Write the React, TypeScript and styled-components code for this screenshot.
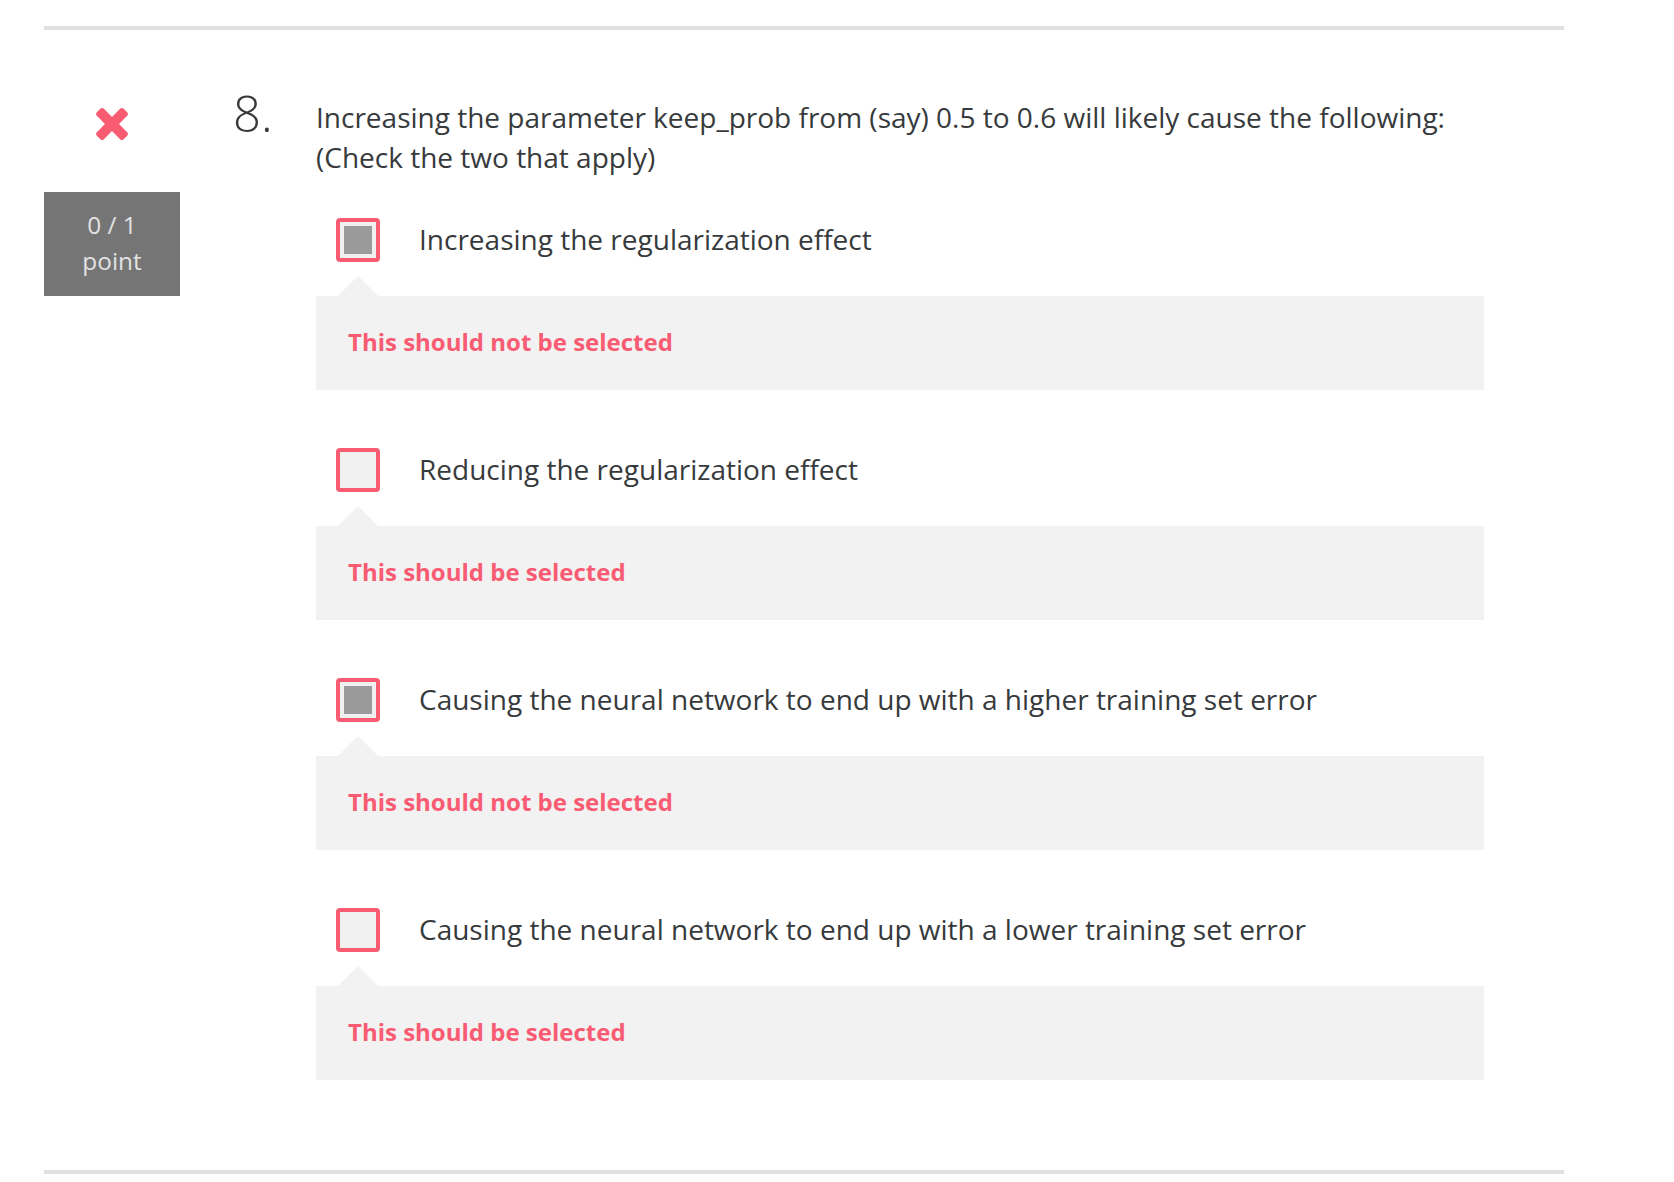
import React from "react";
import styled, { createGlobalStyle } from "styled-components";

const Global = createGlobalStyle`
  html, body { margin: 0; padding: 0; background: #ffffff; }
  body { font-family: "Open Sans", "Noto Sans", sans-serif; color: #373a3c; }
`;

const RED = "#f95c72";

const Page = styled.div`
  width: 1520px;
  padding: 26px 0 0 44px;
`;

const Rule = styled.div`
  height: 4px;
  background: #e0e0e0;
`;

const Question = styled.section`
  display: grid;
  grid-template-columns: 136px 136px 1168px;
  padding: 67px 0 90px;
`;

const Status = styled.div`
  display: flex;
  flex-direction: column;
  align-items: center;
`;

const Cross = styled.svg`
  width: 34px;
  height: 34px;
  margin-top: 10px;
  margin-bottom: 51px;
`;

const Score = styled.div`
  align-self: stretch;
  height: 104px;
  box-sizing: border-box;
  padding-top: 15px;
  background: #757575;
  color: #e2e2e2;
  font-size: 24.4px;
  line-height: 36px;
  text-align: center;
`;

const Number = styled.div`
  padding-left: 53px;
  margin-top: -4px;
  font-size: 49px;
  font-weight: 300;
  line-height: 40px;
`;

const Body = styled.div`
  display: flex;
  flex-direction: column;
`;

const Prompt = styled.div`
  font-size: 28px;
  line-height: 40px;
`;

const Options = styled.div`
  display: flex;
  flex-direction: column;
  gap: 58px;
  margin-top: 41px;
`;

const Option = styled.div`
  display: flex;
  flex-direction: column;
`;

const Row = styled.label`
  display: flex;
  align-items: center;
  padding-left: 20px;
`;

const Box = styled.span`
  width: 44px;
  height: 44px;
  box-sizing: border-box;
  border: 4px solid ${RED};
  border-radius: 4px;
  background: #f0f0f0;
  display: flex;
  align-items: center;
  justify-content: center;
  flex-shrink: 0;
`;

const Mark = styled.span`
  width: 28px;
  height: 28px;
  background: #9a9a9a;
`;

const Label = styled.span`
  margin-left: 39px;
  padding-bottom: 2px;
  font-size: 28px;
  line-height: 40px;
`;

const Feedback = styled.div`
  position: relative;
  margin-top: 34px;
  height: 94px;
  box-sizing: border-box;
  padding: 0 0 3px 32px;
  display: flex;
  align-items: center;
  background: #f2f2f2;
  color: ${RED};
  font-size: 24px;
  font-weight: 700;

  &::before {
    content: "";
    position: absolute;
    top: -20px;
    left: 22px;
    border-left: 20px solid transparent;
    border-right: 20px solid transparent;
    border-bottom: 20px solid #f2f2f2;
  }
`;

const options = [
  { text: "Increasing the regularization effect", checked: true, note: "This should not be selected" },
  { text: "Reducing the regularization effect", checked: false, note: "This should be selected" },
  { text: "Causing the neural network to end up with a higher training set error", checked: true, note: "This should not be selected" },
  { text: "Causing the neural network to end up with a lower training set error", checked: false, note: "This should be selected" },
];

export default function App() {
  return (
    <>
      <Global />
      <Page>
        <Rule />
        <Question>
          <Status>
            <Cross viewBox="0 0 34 34" aria-label="Incorrect">
              <rect x="-2" y="12" width="38" height="10" rx="2.5" fill={RED} transform="rotate(45 17 17)" />
              <rect x="-2" y="12" width="38" height="10" rx="2.5" fill={RED} transform="rotate(-45 17 17)" />
            </Cross>
            <Score>
              0 / 1
              <br />
              point
            </Score>
          </Status>
          <Number>8.</Number>
          <Body>
            <Prompt>
              Increasing the parameter keep_prob from (say) 0.5 to 0.6 will likely cause the following: (Check the two that apply)
            </Prompt>
            <Options>
              {options.map((o) => (
                <Option key={o.text}>
                  <Row>
                    <Box>{o.checked && <Mark />}</Box>
                    <Label>{o.text}</Label>
                  </Row>
                  <Feedback>{o.note}</Feedback>
                </Option>
              ))}
            </Options>
          </Body>
        </Question>
        <Rule />
      </Page>
    </>
  );
}
